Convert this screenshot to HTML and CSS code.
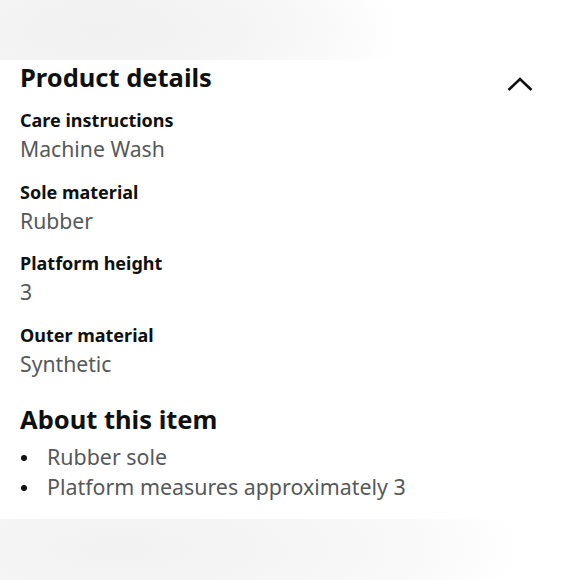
FILE: index.html
```html
<!DOCTYPE html>
<html>
<head>
<meta charset="utf-8">
<link rel="stylesheet" href="styles.css">
</head>
<body>
<div class="top-band"></div>
<main class="panel">
  <div class="head-row">
    <h2 class="title">Product details</h2>
    <svg class="chev" width="26" height="16" viewBox="0 0 26 16"><path d="M1.5 14 L13 3 L24.5 14" fill="none" stroke="#111" stroke-width="2.6"/></svg>
  </div>
  <dl class="details">
    <div class="item"><dt>Care instructions</dt><dd>Machine Wash</dd></div>
    <div class="item"><dt>Sole material</dt><dd>Rubber</dd></div>
    <div class="item"><dt>Platform height</dt><dd>3</dd></div>
    <div class="item"><dt>Outer material</dt><dd>Synthetic</dd></div>
  </dl>
  <h2 class="title about">About this item</h2>
  <ul class="bullets">
    <li>Rubber sole</li>
    <li>Platform measures approximately 3</li>
  </ul>
</main>
<div class="bottom-band"></div>
</body>
</html>
```
FILE: styles.css
```css
html, body { margin: 0; padding: 0; background: #fff; }
body { width: 580px; height: 580px; overflow: hidden; font-family: "Noto Sans", "Open Sans", sans-serif; color: #0f1111; }
.top-band { height: 60px; background: radial-gradient(ellipse 300px 110px at 100px 30px, #f1f1f1 0%, #f4f4f4 45%, #fafafa 80%, #fff 100%); }
.bottom-band { height: 61px; background: radial-gradient(ellipse 400px 120px at 120px 30px, #f2f2f2 0%, #f5f5f5 40%, #fafafa 80%, #fff 100%); }
.panel { height: 459px; padding: 0 20px; box-sizing: border-box; }
.head-row { display: flex; justify-content: space-between; align-items: center; height: 34px; }
.title { margin: 0; font-size: 25.5px; font-weight: 700; line-height: 34px; }
.chev { margin-right: 27px; margin-top: 14px; }
.details { margin: 12px 0 0; }
.item { display: flex; flex-direction: column; margin-bottom: 13.5px; }
dt { font-size: 18px; font-weight: 700; line-height: 28px; }
dd { margin: 0; font-size: 21.2px; color: #565959; line-height: 30px; }
.about { margin-top: 23px; }
.bullets { list-style: none; margin: 6px 0 0; padding: 0; font-size: 21.4px; color: #565959; line-height: 30px; }
.bullets li { display: flex; align-items: center; }
.bullets li::before { content: ""; width: 6px; height: 6px; border-radius: 50%; background: #0f1111; margin: 2px 20px 0 1px; flex: none; }
```
